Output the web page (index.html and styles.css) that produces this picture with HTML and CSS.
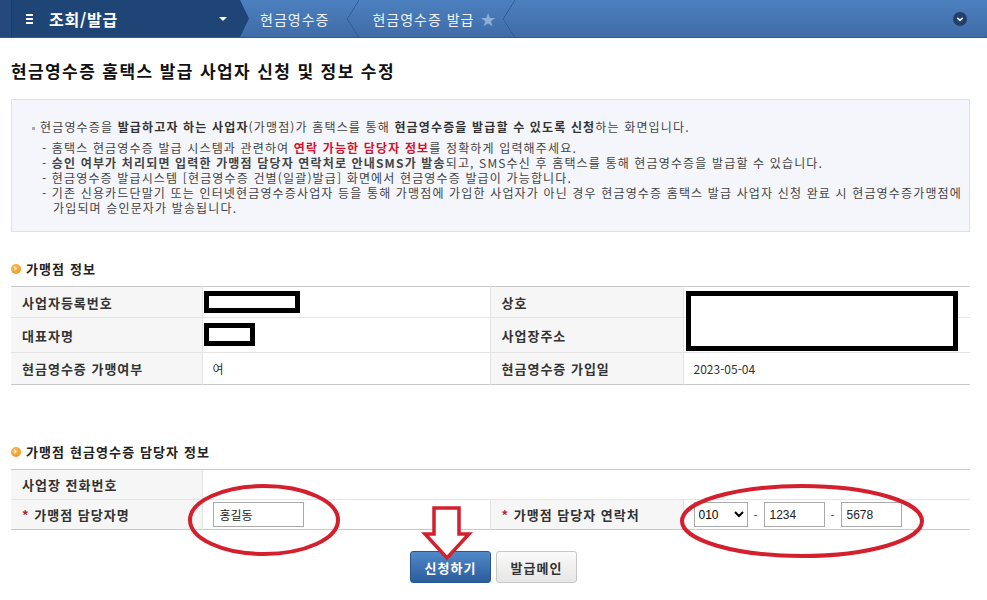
FILE: index.html
```html
<!DOCTYPE html>
<html lang="ko">
<head>
    <meta charset="UTF-8">
    <title>현금영수증 홈택스 발급 사업자 신청 및 정보 수정</title>
    <link rel="stylesheet" href="styles.css">
</head>
<body>

    <div class="topnav">
        <div class="nav-edge"></div>
        <div class="nav-menu">
            <span class="nav-burger"><i></i><i></i><i></i></span>
            <span class="nav-title">조회/발급</span>
            <span class="nav-caret"></span>
        </div>
        <div class="crumb">현금영수증</div>
        <div class="crumb">현금영수증 발급 <span class="crumb-star">&#9733;</span></div>
        <div class="nav-fill"></div>
        <div class="nav-more">
            <svg width="14" height="14" viewBox="0 0 14 14"><circle cx="7" cy="7" r="7" fill="#233f66"/><path d="M4.3 5.8 L7 8.4 L9.7 5.8" stroke="#e6eefa" stroke-width="1.6" fill="none"/></svg>
        </div>
    </div>

    <div class="page">
        <h1 class="page-title">현금영수증 홈택스 발급 사업자 신청 및 정보 수정</h1>

        <div class="info-box">
            <p class="info-lead"><span class="dot"></span>현금영수증을 <b>발급하고자 하는 사업자</b>(가맹점)가 홈택스를 통해 <b>현금영수증을 발급할 수 있도록 신청</b>하는 화면입니다.</p>
            <ul class="info-list">
                <li>홈택스 현금영수증 발급 시스템과 관련하여 <b class="red">연락 가능한 담당자 정보</b>를 정확하게 입력해주세요.</li>
                <li><b>승인 여부가 처리되면 입력한 가맹점 담당자 연락처로 안내SMS가 발송</b>되고, SMS수신 후 홈택스를 통해 현금영수증을 발급할 수 있습니다.</li>
                <li>현금영수증 발급시스템 [현금영수증 건별(일괄)발급] 화면에서 현금영수증 발급이 가능합니다.</li>
                <li>기존 신용카드단말기 또는 인터넷현금영수증사업자 등을 통해 가맹점에 가입한 사업자가 아닌 경우 현금영수증 홈택스 발급 사업자 신청 완료 시 현금영수증가맹점에 가입되며 승인문자가 발송됩니다.</li>
            </ul>
        </div>

        <h2 class="sec-title"><span class="sec-icon"></span>가맹점 정보</h2>
        <div class="tbl-wrap">
            <table class="tbl">
                <colgroup><col class="c1"><col class="c2"><col class="c3"><col class="c4"></colgroup>
                <tr class="r1">
                    <th>사업자등록번호</th><td></td>
                    <th>상호</th><td></td>
                </tr>
                <tr class="r2">
                    <th>대표자명</th><td></td>
                    <th>사업장주소</th><td></td>
                </tr>
                <tr class="r3">
                    <th>현금영수증 가맹여부</th><td>여</td>
                    <th>현금영수증 가입일</th><td>2023-05-04</td>
                </tr>
            </table>
            <span class="mask mask-bizno"></span>
            <span class="mask mask-ceo"></span>
            <span class="mask mask-addr"></span>
        </div>

        <h2 class="sec-title sec-second"><span class="sec-icon"></span>가맹점 현금영수증 담당자 정보</h2>
        <table class="tbl">
            <colgroup><col class="c1"><col class="c2"><col class="c3"><col class="c4"></colgroup>
            <tr class="r1">
                <th>사업장 전화번호</th><td colspan="3"></td>
            </tr>
            <tr class="r1">
                <th><span class="req">*</span> 가맹점 담당자명</th>
                <td><input type="text" class="inp inp-name" value="홍길동"></td>
                <th><span class="req">*</span> 가맹점 담당자 연락처</th>
                <td>
                    <div class="phone">
                        <select class="sel"><option>010</option></select>
                        <span class="dash">-</span>
                        <input type="text" class="inp inp-num" value="1234">
                        <span class="dash">-</span>
                        <input type="text" class="inp inp-num" value="5678">
                    </div>
                </td>
            </tr>
        </table>

        <div class="btns">
            <button class="btn btn-blue">신청하기</button>
            <button class="btn btn-gray">발급메인</button>
        </div>

        <!-- 표시용 빨간 동그라미/화살표 -->
        <svg class="mark" width="987" height="600" viewBox="0 0 987 600">
            <ellipse cx="264" cy="520" rx="74" ry="34" fill="none" stroke="#d41f2d" stroke-width="4"/>
            <ellipse cx="802" cy="521" rx="120" ry="35" fill="none" stroke="#d41f2d" stroke-width="4"/>
            <path d="M434 508 L459 508 L459 534 L469 534 L447 558 L425 534 L434 534 Z" fill="#fff" stroke="#d41f2d" stroke-width="3.5" stroke-linejoin="miter"/>
        </svg>
    </div>

</body>
</html>
```

FILE: styles.css
```css
/* 기본 */
body {
    margin: 0;
    font-family: "Noto Sans CJK KR", "Noto Sans", sans-serif;
    font-size: 12px;
    color: #333;
    background: #fff;
}

/* 상단 메뉴 */
.topnav {
    display: flex;
    height: 38px;
    background: linear-gradient(#4c80be, #3f6ca8);
    color: #eef3fa;
    border-bottom: 1px solid #35598a;
    box-sizing: border-box;
}

.nav-edge {
    width: 11px;
    background: #24497a;
    border-right: 1px solid #1b3c66;
}

.nav-menu {
    display: flex;
    align-items: center;
    width: 237px;
    padding-left: 14px;
    box-sizing: border-box;
    background: #1f4577;
    clip-path: polygon(0 0, 228px 0, 237px 50%, 228px 100%, 0 100%);
    color: #fff;
}

.nav-burger {
    display: flex;
    flex-direction: column;
    gap: 2px;
    width: 7px;
    margin-right: 16px;
}

.nav-burger i {
    height: 2px;
    background: #fff;
}

.nav-title {
    font-size: 16px;
    font-weight: bold;
    letter-spacing: 0.8px;
}

.nav-caret {
    margin-left: auto;
    margin-right: 22px;
    border-left: 4px solid transparent;
    border-right: 4px solid transparent;
    border-top: 4px solid #fff;
}

.crumb {
    display: flex;
    align-items: center;
    padding: 0 30px 0 11px;
    font-size: 14px;
    letter-spacing: 1px;
    position: relative;
}

.crumb + .crumb {
    padding-left: 13px;
    padding-right: 18px;
}

.crumb::after {
    content: "";
    position: absolute;
    right: 0;
    top: 0;
    width: 12px;
    height: 38px;
    background: linear-gradient(to bottom right, transparent 48%, #2d5386 50%, transparent 54%) top / 12px 19px no-repeat,
                linear-gradient(to top right, transparent 48%, #2d5386 50%, transparent 54%) bottom / 12px 19px no-repeat;
}

.crumb-star {
    color: #8eaed6;
    font-size: 15px;
    margin-left: 6px;
}

.nav-fill {
    flex: 1;
}

.nav-more {
    display: flex;
    align-items: center;
    padding-right: 20px;
}

/* 본문 */
.page {
    position: relative;
    padding: 21px 17px 0 11px;
}

.page-title {
    margin: 0;
    font-size: 17px;
    line-height: 24px;
    font-weight: bold;
    letter-spacing: 1.4px;
    color: #111;
}

.info-box {
    margin-top: 16px;
    height: 133px;
    box-sizing: border-box;
    padding: 18px 6px 0 20px;
    background: #f4f6fb;
    border: 1px solid #dde2ea;
    letter-spacing: 1.15px;
}

.info-lead {
    margin: 0 0 5px;
    line-height: 17px;
    color: #444;
}

.info-lead b {
    color: #333;
}

.dot {
    display: inline-block;
    width: 3px;
    height: 3px;
    background: #aaa;
    vertical-align: middle;
    margin-right: 5px;
}

.info-list {
    list-style: none;
    margin: 0;
    padding: 0 0 0 10px;
    color: #444;
}

.info-list li {
    line-height: 15px;
    padding-left: 11px;
    text-indent: -11px;
}

.info-list li::before {
    content: "- ";
}

.red {
    color: #d3122e;
}

/* 섹션 제목 */
.sec-title {
    display: flex;
    align-items: center;
    margin: 28px 0 8px;
    font-size: 13px;
    line-height: 18px;
    font-weight: bold;
    letter-spacing: 1.1px;
    color: #222;
}

.sec-second {
    margin-top: 58px;
}

.sec-icon {
    width: 10px;
    height: 10px;
    border-radius: 50%;
    background: radial-gradient(circle at 40% 35%, #ffc060, #e98a10);
    margin-right: 5px;
    position: relative;
}

.sec-icon::after {
    content: "";
    position: absolute;
    left: 2px;
    top: 3px;
    width: 2px;
    height: 2px;
    border-right: 1.5px solid #fff;
    border-top: 1.5px solid #fff;
    transform: rotate(45deg);
}

/* 표 */
.tbl-wrap {
    position: relative;
}

.tbl {
    width: 959px;
    border-collapse: collapse;
    table-layout: fixed;
    border-top: 1px solid #c9c9c9;
    border-bottom: 1px solid #c9c9c9;
}

.c1 { width: 191px; }
.c2 { width: 288px; }
.c3 { width: 193px; }
.c4 { width: 287px; }

.tbl th {
    text-align: left;
    background: #f6f6f6;
    font-size: 13px;
    font-weight: bold;
    letter-spacing: 1px;
    color: #333;
    padding: 0 11px;
    border-bottom: 1px solid #e4e4e4;
    border-right: 1px solid #e4e4e4;
}

.tbl td {
    padding: 0 10px;
    border-bottom: 1px solid #e4e4e4;
    border-right: 1px solid #e4e4e4;
    color: #333;
}

.tbl td:last-child {
    border-right: none;
}

.tbl tr:last-child th,
.tbl tr:last-child td {
    border-bottom: none;
}

.r1 { height: 31px; }
.r2 { height: 35px; }
.r3 { height: 32px; }

.sec-second + .tbl .r1 {
    height: 30px;
}

.req {
    color: #b3242c;
}

/* 가림 상자 */
.mask {
    position: absolute;
    background: #fff;
    border: 5px solid #000;
    box-sizing: border-box;
}

.mask-bizno { left: 193px; top: 5px; width: 96px; height: 22px; }
.mask-ceo { left: 193px; top: 37px; width: 51px; height: 23px; }
.mask-addr { left: 675px; top: 5px; width: 272px; height: 60px; }

/* 입력 */
.inp {
    height: 25px;
    box-sizing: border-box;
    border: 1px solid #aaa;
    padding: 0 6px;
    font-family: inherit;
    font-size: 12px;
    color: #222;
    vertical-align: middle;
}

.inp-name {
    width: 91px;
}

.inp-num {
    width: 61px;
    padding: 0 5px;
    font-family: "Liberation Sans", sans-serif;
}

.phone {
    display: flex;
    align-items: center;
}

.sel {
    width: 54px;
    height: 25px;
    border: 1px solid #aaa;
    background: #fff;
    font-family: "Liberation Sans", sans-serif;
    font-size: 12px;
}

.dash {
    width: 16px;
    text-align: center;
    color: #555;
}

/* 버튼 */
.btns {
    display: flex;
    justify-content: center;
    gap: 5px;
    margin-top: 21px;
    padding-left: 6px;
}

.btn {
    width: 81px;
    height: 32px;
    border-radius: 3px;
    font-family: inherit;
    font-size: 13px;
    font-weight: bold;
    letter-spacing: 1px;
    cursor: pointer;
}

.btn-blue {
    background: linear-gradient(#5089c9, #2c5c9c);
    border: 1px solid #2a5690;
    color: #fff;
}

.btn-gray {
    background: linear-gradient(#fafafa, #e6e6e6);
    border: 1px solid #c8c8c8;
    color: #333;
}

/* 빨간 표시 */
.mark {
    position: absolute;
    left: 0;
    top: -38px;
    pointer-events: none;
}
```
